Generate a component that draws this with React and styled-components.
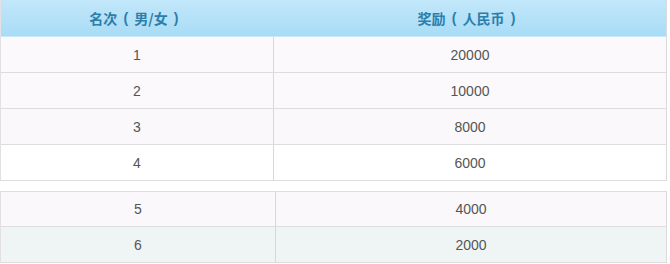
import React from "react"
import styled, { createGlobalStyle } from "styled-components"

const GlobalStyle = createGlobalStyle`
  body {
    margin: 0;
    background: #fff;
    font-family: "Liberation Sans", Arial, "Noto Sans CJK SC", sans-serif;
  }
`

const Page = styled.div`
  width: 667px;
  display: flex;
  flex-direction: column;
  gap: 10px;
`

const Table = styled.div`
  border-left: 1px solid #e2e0e3;
  border-right: 1px solid #dcdadd;
  display: flex;
  flex-direction: column;
`

const Head = styled.div`
  display: grid;
  grid-template-columns: ${p => p.split}px 1fr;
  height: 37px;
  background: linear-gradient(#c2e7fa, #a8dcf6);
  border-bottom: 1px solid #c9e9f8;
  box-sizing: border-box;
`

const HeadCell = styled.div`
  display: flex;
  align-items: center;
  justify-content: center;
  color: #2c7eab;
  font-weight: 700;
  font-size: 14px;
  font-family: "Noto Sans CJK SC", sans-serif;
`

const Paren = styled.span`
  display: inline-block;
  width: 17px;
  text-align: center;
  font-family: "Liberation Sans", Arial, sans-serif;
`

const Row = styled.div`
  display: grid;
  grid-template-columns: ${p => p.split}px 1fr;
  height: 36px;
  box-sizing: border-box;
  background: ${p => p.bg};
  border-top: ${p => (p.first ? "1px solid #dedcdf" : "none")};
  border-bottom: 1px solid #dedcdf;
`

const Cell = styled.div`
  display: flex;
  align-items: center;
  justify-content: center;
  color: #555;
  font-size: 14px;
  border-right: ${p => (p.divider ? "1px solid #d8d6d9" : "none")};
`

const top = [
  ["1", "20000", "#fcf9fc"],
  ["2", "10000", "#fbf9fb"],
  ["3", "8000", "#faf8fa"],
  ["4", "6000", "#ffffff"],
]

const bottom = [
  ["5", "4000", "#faf8fa"],
  ["6", "2000", "#eff5f5"],
]

const App = () => (
  <>
    <GlobalStyle />
    <Page>
      <Table>
        <Head split={272}>
          <HeadCell>
            名次<Paren>(</Paren>男/女<Paren>)</Paren>
          </HeadCell>
          <HeadCell>
            奖励<Paren>(</Paren>人民币<Paren>)</Paren>
          </HeadCell>
        </Head>
        {top.map(([rank, prize, bg]) => (
          <Row key={rank} split={273} bg={bg}>
            <Cell divider>{rank}</Cell>
            <Cell>{prize}</Cell>
          </Row>
        ))}
      </Table>
      <Table>
        {bottom.map(([rank, prize, bg], i) => (
          <Row key={rank} split={275} bg={bg} first={i === 0}>
            <Cell divider>{rank}</Cell>
            <Cell>{prize}</Cell>
          </Row>
        ))}
      </Table>
    </Page>
  </>
)

export default App
